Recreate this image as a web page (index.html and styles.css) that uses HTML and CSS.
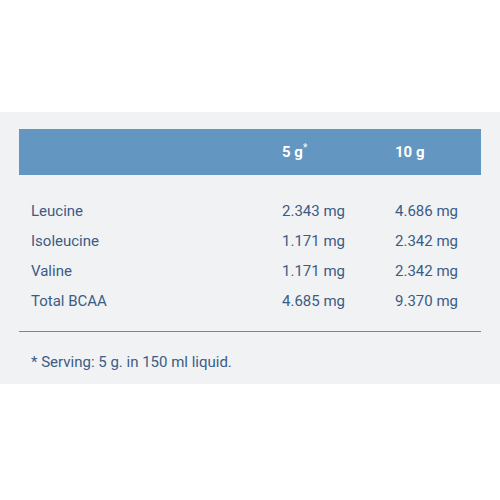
FILE: index.html
```html
<!DOCTYPE html>
<html>
<head>
<meta charset="utf-8">
<link rel="stylesheet" href="styles.css">
</head>
<body>
<div class="panel">
  <div class="head grid">
    <span></span><span>5 g<span class="ast">*</span></span><span>10 g</span>
  </div>
  <div class="rows">
    <div class="grid row"><span>Leucine</span><span>2.343 mg</span><span>4.686 mg</span></div>
    <div class="grid row"><span>Isoleucine</span><span>1.171 mg</span><span>2.342 mg</span></div>
    <div class="grid row"><span>Valine</span><span>1.171 mg</span><span>2.342 mg</span></div>
    <div class="grid row"><span>Total BCAA</span><span>4.685 mg</span><span>9.370 mg</span></div>
  </div>
  <div class="divider"></div>
  <p class="note">* Serving: 5 g. in 150 ml liquid.</p>
</div>
</body>
</html>
```
FILE: styles.css
```css
html, body { margin: 0; padding: 0; background: #fff; }
body { font-family: Roboto, "Noto Sans", sans-serif; }
.panel {
  margin-top: 112px;
  background: #f1f2f4;
  padding: 17px 19px 12px;
  height: 272px;
  box-sizing: border-box;
}
.grid {
  display: grid;
  grid-template-columns: 251px 113px 1fr;
  padding-left: 12px;
  align-items: center;
}
.head {
  background: #6396c0;
  height: 46px;
  color: #fff;
  font-weight: 700;
  font-size: 15px;
}
.ast { font-size: 10px; font-weight: 400; vertical-align: top; position: relative; top: -1px; }
.rows { padding-top: 21px; }
.row {
  height: 30px;
  font-size: 15px;
  color: #3b5c84;
}
.divider {
  margin-top: 15px;
  height: 1px;
  background: #6f8ba3;
}
.note {
  margin: 20px 0 0;
  padding-left: 12px;
  line-height: 20px;
  font-size: 15px;
  color: #3b5c84;
}
```
